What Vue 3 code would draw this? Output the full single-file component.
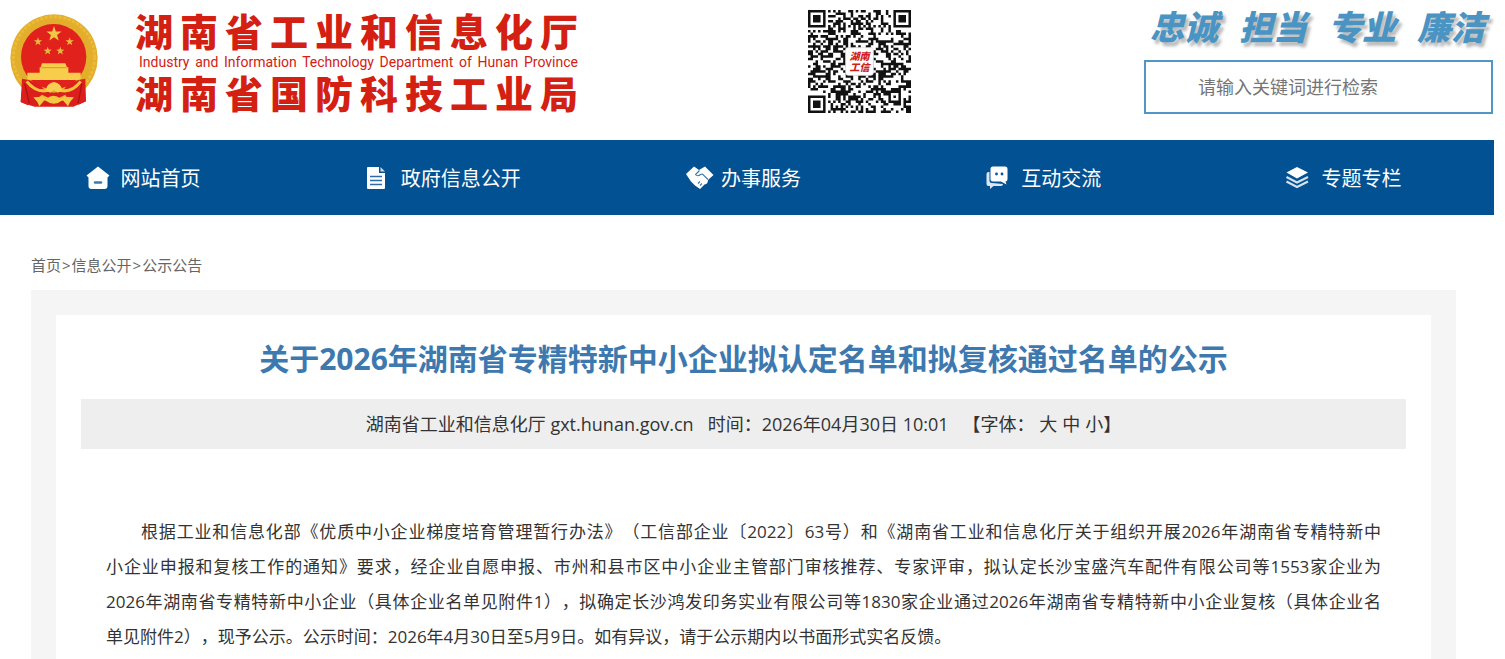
<template>
  <div class="page">
    <header class="header">
      <a class="brand" href="#">
        <svg class="emblem" viewBox="30 42 264 282" aria-hidden="true">
          <path d="M70 236 L62 306 L84 314 L104 320 L220 320 L238 312 L258 304 L250 238 Z" fill="#dc1f1c" />
          <circle cx="162" cy="174" r="131" fill="#e3ae2c" />
          <circle cx="162" cy="172" r="122" fill="none" stroke="#ebbc3a" stroke-width="8" stroke-dasharray="9 5" />
          <circle cx="161" cy="170" r="98" fill="#e0211c" />
          <polygon :points="star(162, 102, 24)" fill="#f0c846" />
          <polygon :points="star(114, 125, 13)" fill="#eab83c" />
          <polygon :points="star(209, 125, 13)" fill="#eab83c" />
          <polygon :points="star(143, 153, 13)" fill="#eab83c" />
          <polygon :points="star(181, 153, 13)" fill="#eab83c" />
          <path d="M126 190 H196 L201 202 H205 V218 H242 V240 H82 V218 H119 V202 H122 Z" fill="#f7cd4b" />
          <path d="M124 203 H200" stroke="#d99a26" stroke-width="3" />
          <path d="M66 236 Q110 240 134 270 Q160 286 190 270 Q212 240 256 236 L258 304 L236 314 Q196 292 196 284 Q162 306 126 284 L84 316 L62 306 Z" fill="#dc1f1c" />
          <path d="M80 244 Q112 284 154 268 L162 262 L170 268 Q212 284 242 244" fill="none" stroke="#f1c23c" stroke-width="9" />
          <path d="M138 270 Q140 250 162 246 Q184 250 186 270 L174 278 L162 270 L150 278 Z" fill="#f6cf50" />
          <path d="M100 292 L130 290 L140 296 Q160 278 182 296 L192 290 L222 292 L210 306 L204 319 L188 300 Q162 322 134 300 L118 319 L112 306 Z" fill="#f3c744" />
          <path d="M74 250 L88 310 M246 250 L234 310" stroke="#a91512" stroke-width="4" />
        </svg>
        <span class="brand-text">
          <span class="brand-cn">湖南省工业和信息化厅</span>
          <span class="brand-en">Industry and Information Technology Department of Hunan Province</span>
          <span class="brand-cn">湖南省国防科技工业局</span>
        </span>
      </a>

      <svg class="qr" viewBox="0 0 41 41" role="img" aria-label="湖南工信">
        <path :d="qrPath" fill="#111" />
        <rect x="15" y="15" width="11" height="11" rx="1" fill="#fff" stroke="#ddd" stroke-width="0.3" />
        <text x="20.5" y="20" class="qr-text">湖南</text>
        <text x="20.5" y="24.4" class="qr-text">工信</text>
      </svg>

      <div class="header-right">
        <div class="slogan">
          <span v-for="word in slogan" :key="word">{{ word }}</span>
        </div>
        <form class="search" @submit.prevent>
          <input v-model="keyword" type="text" aria-label="请输入关键词进行检索" placeholder="请输入关键词进行检索" />
        </form>
      </div>
    </header>

    <nav class="nav">
      <ul>
        <li v-for="item in navList" :key="item.name">
          <a href="#">
            <svg class="nav-icon" viewBox="0 0 24 24" aria-hidden="true">
              <g v-if="item.icon === 'home'">
                <path d="M12 0.500 L23.500 9.500 L21.500 11.500 V20 Q21.500 23 18.500 23 H5.500 Q2.500 23 2.500 20 V11.500 L0.500 9.500 Z" fill="#fff" />
                <path d="M9 16.500 H15" stroke="#4078ad" stroke-width="2.500" stroke-linecap="round" />
              </g>
              <g v-else-if="item.icon === 'doc'">
                <path d="M1 2 Q1 1 2 1 H13 V7 H19 V22 Q19 23 18 23 H2 Q1 23 1 22 Z" fill="#fff" />
                <path d="M14.500 1 L19 5.500 H14.500 Z" fill="#c9d9e8" />
                <path d="M4 10.500 H16 M4 14.500 H16 M4 18.500 H16" stroke="#2f6ca5" stroke-width="1.600" />
              </g>
              <g v-else-if="item.icon === 'hands'">
                <path d="M0 8 L8 0.500 L13 4 L19 0.500 L27.500 9 L22 14 Q22 18 18.500 18.500 L14 23 L9 19.500 L5 15.500 Z" fill="#fff" />
                <path d="M13.500 4.500 L9.500 8.500 Q11.500 11 14.500 8.500 L16.500 8 L22 13.500 M14 19.500 L16 17.500 M12 17.500 L14 15.500" fill="none" stroke="#3a76ab" stroke-width="1.100" />
              </g>
              <g v-else-if="item.icon === 'chat'">
                <path d="M2.500 6 Q0.500 6 0.500 8 V18 Q0.500 20 2.500 20 H4 V23 L7.500 20 H15 Q17 20 17 18 L6 17 Q3.500 17 3.500 14.500 V6 Z" fill="#dbe6f0" />
                <path d="M7 0.500 H19 Q21.500 0.500 21.500 3 V13 Q21.500 15.500 19.500 15.500 L20.500 18.500 L15 15.500 H7 Q4.500 15.500 4.500 13 V3 Q4.500 0.500 7 0.500 Z" fill="#fff" />
                <circle cx="10.500" cy="8" r="1.400" fill="#02569a" />
                <circle cx="16" cy="8" r="1.400" fill="#02569a" />
              </g>
              <g v-else>
                <path d="M11 1 L22 6.500 L11 12.500 L0.500 6.500 Z" fill="#fff" />
                <path d="M0.500 11 L11 16.500 L22 11 M0.500 15.500 L11 21 L22 15.500" fill="none" stroke="#d5e2ee" stroke-width="2.200" />
              </g>
            </svg>
            {{ item.name }}
          </a>
        </li>
      </ul>
    </nav>

    <div class="crumbs">
      <a href="#">首页</a><span>&gt;</span><a href="#">信息公开</a><span>&gt;</span><a href="#">公示公告</a>
    </div>

    <main class="main">
      <article class="article">
        <h1>关于2026年湖南省专精特新中小企业拟认定名单和拟复核通过名单的公示</h1>
        <div class="meta">
          <span>湖南省工业和信息化厅 gxt.hunan.gov.cn</span>
          <span>时间：2026年04月30日 10:01</span>
          <span class="sizes">
            【字体：
            <button v-for="(label, key) in sizes" :key="key" type="button" @click="size = key">{{ label }}</button>】
          </span>
        </div>
        <p class="content" :class="size">
          <span v-for="line in lines" :key="line">{{ line }}</span>
        </p>
      </article>
    </main>
  </div>
</template>

<script setup>
import { ref } from "vue";

const keyword = ref("");
const size = ref("normal");

const sizes = { large: "大", normal: "中", small: "小" };

const slogan = ["忠诚", "担当", "专业", "廉洁"];

const navList = [
  { name: "网站首页", icon: "home" },
  { name: "政府信息公开", icon: "doc" },
  { name: "办事服务", icon: "hands" },
  { name: "互动交流", icon: "chat" },
  { name: "专题专栏", icon: "layers" },
];

const lines = [
  "根据工业和信息化部《优质中小企业梯度培育管理暂行办法》（工信部企业〔2022〕63号）和《湖南省工业和信息化厅关于组织开展2026年湖南省专精特新中",
  "小企业申报和复核工作的通知》要求，经企业自愿申报、市州和县市区中小企业主管部门审核推荐、专家评审，拟认定长沙宝盛汽车配件有限公司等1553家企业为",
  "2026年湖南省专精特新中小企业（具体企业名单见附件1），拟确定长沙鸿发印务实业有限公司等1830家企业通过2026年湖南省专精特新中小企业复核（具体企业名",
  "单见附件2），现予公示。公示时间：2026年4月30日至5月9日。如有异议，请于公示期内以书面形式实名反馈。",
];

// 五角星顶点
const star = (cx, cy, r) => {
  const points = [];
  for (let i = 0; i < 10; i++) {
    const radius = i % 2 ? r * 0.4 : r;
    const angle = (Math.PI / 5) * i - Math.PI / 2;
    points.push(`${cx + radius * Math.cos(angle)},${cy + radius * Math.sin(angle)}`);
  }
  return points.join(" ");
};

// 二维码：三个定位角 + 一个校正点，其余为数据点
const ring = (x, y, cx, cy) => Math.max(Math.abs(x - cx), Math.abs(y - cy));

const makeQr = () => {
  let seed = 2026;
  let d = "";
  for (let y = 0; y < 41; y++) {
    for (let x = 0; x < 41; x++) {
      seed = (seed * 1103515245 + 12345) % 2147483648;
      let dark = seed / 2147483648 < 0.5;
      if (x === 6 || y === 6) dark = (x + y) % 2 === 0;
      const align = ring(x, y, 34, 34);
      if (align <= 2) dark = align !== 1;
      const finder = Math.min(ring(x, y, 3, 3), ring(x, y, 37, 3), ring(x, y, 3, 37));
      if (finder <= 4) dark = finder !== 2 && finder !== 4;
      if (dark) d += `M${x} ${y}h1v1h-1z`;
    }
  }
  return d;
};

const qrPath = makeQr();
</script>

<style>
body {
  margin: 0;
  background: #fff;
}
</style>

<style scoped>
.page {
  display: flex;
  flex-direction: column;
  min-height: 100vh;
  margin-right: 11px;
  font-family: "Open Sans", "Noto Sans CJK SC", sans-serif;
  color: #333;
}

a {
  color: inherit;
  text-decoration: none;
}

.header {
  display: flex;
  justify-content: space-between;
  align-items: flex-start;
  box-sizing: border-box;
  height: 140px;
  padding: 10px 1px 0 10px;
}

.brand {
  display: flex;
  gap: 37px;
  color: #d32012;
}
.emblem {
  width: 88px;
  height: 94px;
  margin-top: 4px;
}
.brand-text {
  display: flex;
  flex-direction: column;
  width: 443px;
}
.brand-cn {
  font-size: 38px;
  font-weight: 900;
  line-height: 42px;
  text-align-last: justify;
}
.brand-en {
  padding: 0 0 0 4px;
  font-family: Roboto, "Open Sans", sans-serif;
  font-size: 14px;
  line-height: 20px;
  white-space: nowrap;
  text-align-last: justify;
}

.qr {
  width: 103px;
  height: 103px;
  margin-right: 4px;
}
.qr-text {
  font-size: 4px;
  font-weight: 900;
  font-style: italic;
  text-anchor: middle;
  fill: #cf1d1d;
}

.header-right {
  width: 349px;
}
.slogan {
  display: flex;
  justify-content: space-between;
  padding: 0 8px 0 6px;
  font-size: 34px;
  font-weight: 900;
  font-style: italic;
  line-height: 34px;
  color: #4a94c4;
  text-shadow: 3px 4px 3px #bbb;
}
.search {
  margin-top: 16px;
}
.search input {
  display: block;
  box-sizing: border-box;
  width: 100%;
  height: 54px;
  padding: 0 52px;
  border: 2px solid #5196c4;
  outline: none;
  background: #fff;
  font-family: inherit;
  font-size: 18px;
}
.search input::placeholder {
  color: #757575;
}

.nav {
  overflow: hidden;
  background: #025293;
}
.nav ul {
  display: flex;
  margin: 0 0 0 -7px;
  padding: 0;
  list-style: none;
}
.nav li {
  flex: 1;
}
.nav a {
  display: flex;
  justify-content: center;
  align-items: center;
  gap: 11px;
  height: 75px;
  font-size: 20px;
  color: #fff;
}
.nav-icon {
  width: 24px;
  height: 24px;
  overflow: visible;
}

.crumbs {
  padding: 40px 31px 14px;
  font-size: 15px;
  line-height: 21px;
  color: #666;
}
.crumbs span {
  margin: 0 1px;
}

.main {
  display: flex;
  flex: 1;
  margin: 0 38px 0 31px;
  padding: 25px 25px 0;
  background: #f5f5f5;
}
.article {
  flex: 1;
  padding: 20px 25px 0;
  background: #fff;
}
.article h1 {
  margin: 0 0 16px;
  font-size: 30px;
  line-height: 48px;
  text-align: center;
  color: #3d79ae;
}
.meta {
  display: flex;
  justify-content: center;
  gap: 14px;
  background: #eee;
  font-size: 18px;
  line-height: 50px;
  text-spacing-trim: space-all;
}
.sizes button {
  padding: 0;
  border: 0;
  background: none;
  color: inherit;
  font: inherit;
  cursor: pointer;
}
.sizes button + button {
  margin-left: 5px;
}

.content {
  margin: 65px 25px 0;
  font-size: 17px;
  line-height: 35px;
  text-spacing-trim: space-all;
}
.content span {
  display: block;
  text-align-last: justify;
}
.content span:first-child {
  padding-left: 35px;
}
.content span:last-child {
  text-align-last: left;
}
.content.large {
  font-size: 19px;
}
.content.small {
  font-size: 15px;
}
</style>
